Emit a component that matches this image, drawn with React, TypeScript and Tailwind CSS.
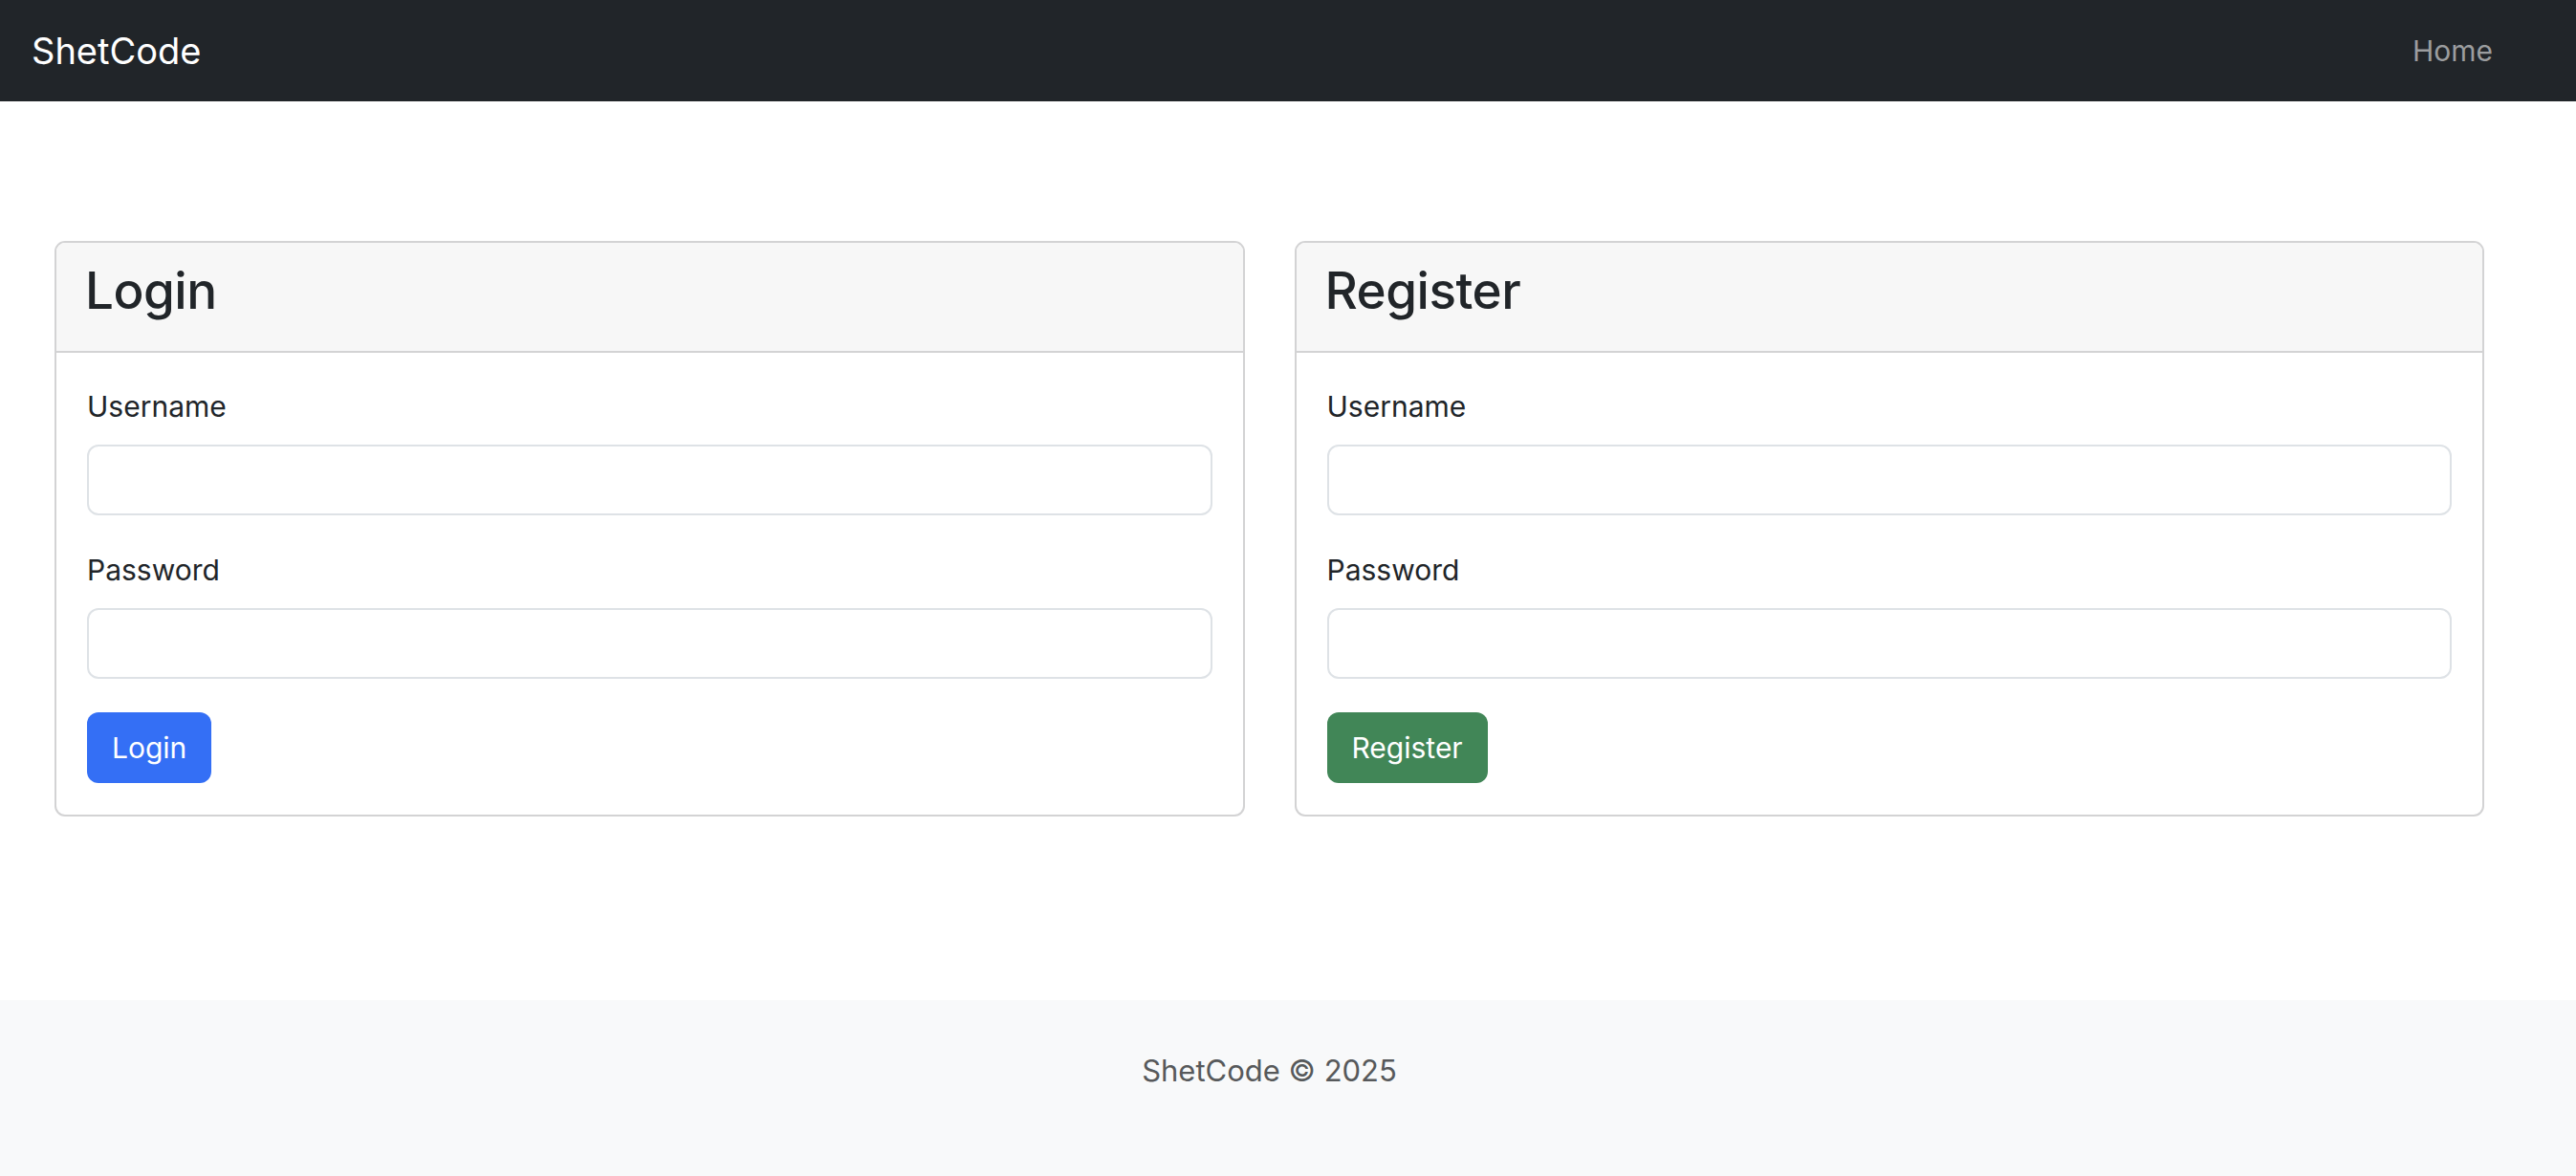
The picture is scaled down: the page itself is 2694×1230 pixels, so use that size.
import React from 'react';

const font = { fontFamily: 'Inter, "Liberation Sans", sans-serif' };

function Field({ label }: { label: string }) {
  return (
    <div className="mb-[35px]">
      <label className="mb-[17px] block text-[30px] leading-[45px] text-[#212529]">{label}</label>
      <input
        type="text"
        className="block h-[74px] w-full rounded-[12px] border-2 border-[#dee2e6] bg-white px-[22px] text-[30px] outline-none"
      />
    </div>
  );
}

function AuthCard({ title, button, color }: { title: string; button: string; color: string }) {
  return (
    <div className="flex-1 overflow-hidden rounded-[11px] border-2 border-[#d3d3d4] bg-white">
      <div className="border-b-2 border-[#d3d3d4] bg-[#f7f7f7] px-[30px] pt-[19px] pb-[32px]">
        <h2 className="text-[53px] leading-[62px] font-medium tracking-[-0.5px] text-[#212529]">{title}</h2>
      </div>
      <div className="px-[32px] pt-[34px] pb-[33px]">
        <Field label="Username" />
        <Field label="Password" />
        <button className={`h-[74px] rounded-[12px] px-[26px] text-[30px] text-white ${color}`}>{button}</button>
      </div>
    </div>
  );
}

export default function App() {
  return (
    <div className="flex min-h-screen flex-col bg-white" style={font}>
      <nav className="flex h-[106px] items-center justify-between bg-[#212529] pr-[87px] pl-[33px]">
        <span className="text-[38px] text-white">ShetCode</span>
        <a className="text-[30px] text-[#9b9d9f]">Home</a>
      </nav>

      <main className="flex-1 pt-[146px] pr-[96px] pl-[57px]">
        <div className="flex gap-[52px]">
          <AuthCard title="Login" button="Login" color="bg-[#346ff5]" />
          <AuthCard title="Register" button="Register" color="bg-[#418657]" />
        </div>
      </main>

      <footer className="h-[184px] bg-[#f8f9fa] pt-[52px] pr-[39px] text-center">
        <span className="text-[31px] leading-[44px] text-[#57595b]">ShetCode © 2025</span>
      </footer>
    </div>
  );
}
